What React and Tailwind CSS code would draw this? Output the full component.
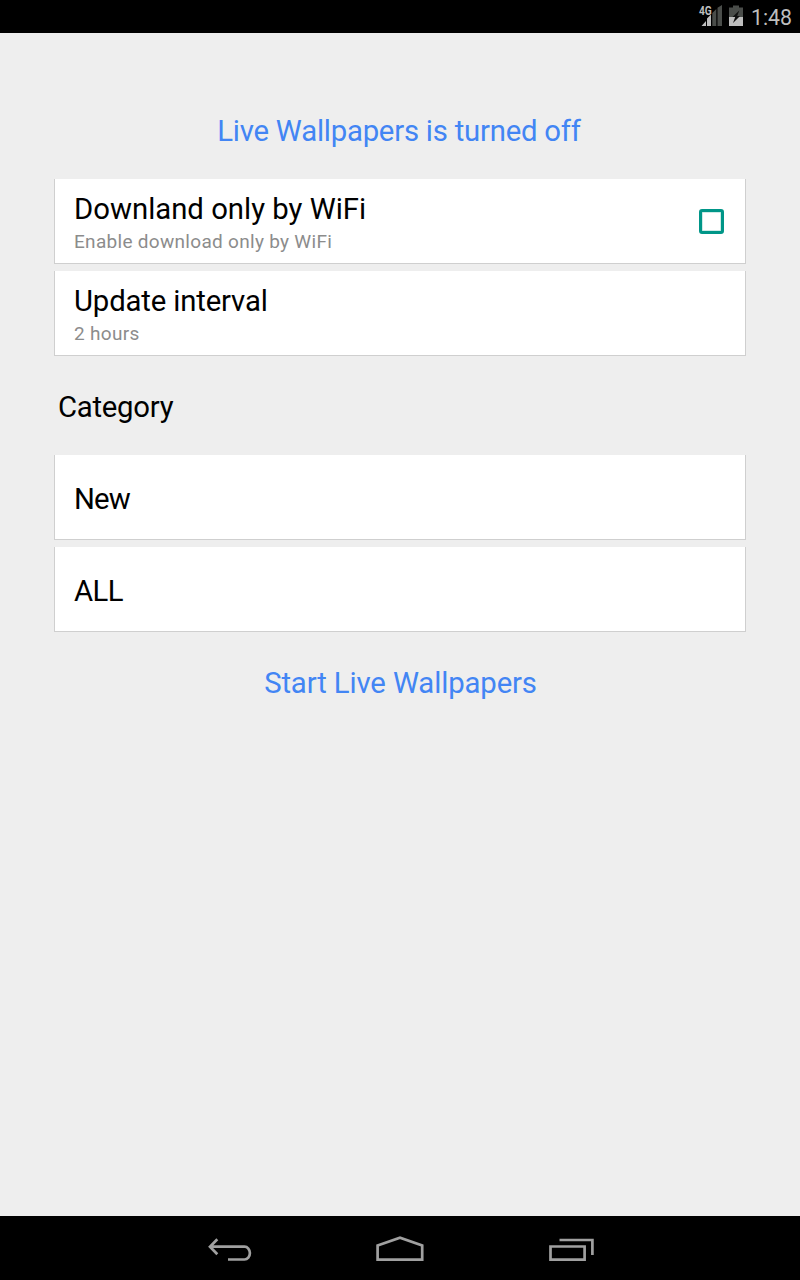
function Card({ title, sub, spacing = "", children }) {
  return (
    <div className="flex h-[85px] items-center justify-between border border-t-0 border-[#cfcfcf] bg-white pl-[19px] pr-[21px]">
      <div className={sub ? "flex flex-col" : "flex flex-col pt-1"}>
        <span className={`text-[29.3px] leading-[34px] ${spacing}`}>{title}</span>
        {sub && (
          <span className="mt-[3px] h-[22px] text-[19px] leading-[25px] tracking-[0.3px] text-[#8c8c8c]">{sub}</span>
        )}
      </div>
      {children}
    </div>
  );
}

function StatusIcons() {
  return (
    <svg className="h-[33px] w-[52px]" viewBox="696 0 52 33">
      <path d="M717.500 7.800 722 5V26H717.500zM712.300 13 716.300 9V26H712.300z" fill="#4a4d4a" />
      <path d="M707 18.600 711 14.500V26H707zM701.500 26 706 21V26z" fill="#bebebe" />
      <text x="699" y="15" fill="#bebebe" fontFamily="Roboto, sans-serif" fontSize="12.5" fontWeight="700" textLength="12.800" lengthAdjust="spacingAndGlyphs">4G</text>
      <path d="M733 5.500H739V7.500H743V17H729V7.500H733z" fill="#4a4d4a" />
      <path d="M729 17H743V26H729z" fill="#bebebe" />
      <path d="M739.300 10.500 732.500 17H735.200L733 23 740 16H737.200z" fill="#111" />
    </svg>
  );
}

export default function App() {
  return (
    <div className="flex h-[1280px] w-[800px] flex-col overflow-hidden bg-[#eeeeee] font-[Roboto,sans-serif] text-black">
      <header className="flex h-[33px] items-center justify-end gap-[3px] bg-black pr-2">
        <StatusIcons />
        <span className="pt-[2px] text-[21.3px] text-[#bebebe]">1:48</span>
      </header>
      <main className="flex grow flex-col px-[54px] pt-[81px]">
        <h1 className="pr-[2px] text-center text-[29.3px] leading-[34px] tracking-[-0.22px] text-[#4285f4]">Live Wallpapers is turned off</h1>
        <div className="mt-[31px] flex flex-col gap-[7px]">
          <Card title="Downland only by WiFi" sub="Enable download only by WiFi">
            <span className="size-[25px] rounded-[3px] border-3 border-[#009688] shadow-[inset_0_0_0_0.5px_#a0d8d0]" />
          </Card>
          <Card title="Update interval" sub="2 hours" spacing="tracking-[-0.15px]" />
        </div>
        <h2 className="mt-[34px] pl-1 text-[29.3px] leading-[34px] tracking-[-0.25px]">Category</h2>
        <div className="mt-[31px] flex flex-col gap-[7px]">
          <Card title="New" spacing="tracking-[-0.9px]" />
          <Card title="ALL" spacing="tracking-[-0.6px]" />
        </div>
        <button className="mt-[34px] pl-px text-[29.3px] leading-[34px] tracking-[-0.12px] text-[#4285f4]">Start Live Wallpapers</button>
      </main>
      <nav className="flex h-16 items-center bg-black pl-[200px]">
        <svg className="h-16 w-[60px]" viewBox="200 1216 60 64" fill="none" stroke="#a0a0a0" strokeWidth="2.7">
          <path d="M210 1246.700H244.500A5.400 6.400 0 0 1 244.500 1259.500H228M217.300 1239.200 210 1246.700 217.300 1254.300" />
        </svg>
        <svg className="ml-[110px] h-16 w-[60px]" viewBox="370 1216 60 64" fill="none" stroke="#a0a0a0" strokeWidth="2.7">
          <path d="M377.600 1245.500 400 1237.700 422.200 1245.500V1259.600H377.600z" />
        </svg>
        <svg className="ml-[110px] h-16 w-[60px]" viewBox="540 1216 60 64" fill="none" stroke="#a0a0a0" strokeWidth="2.7">
          <path d="M550.500 1246.500H584.600V1259.600H550.500zM559.500 1240H592.400V1255" />
        </svg>
      </nav>
    </div>
  );
}
